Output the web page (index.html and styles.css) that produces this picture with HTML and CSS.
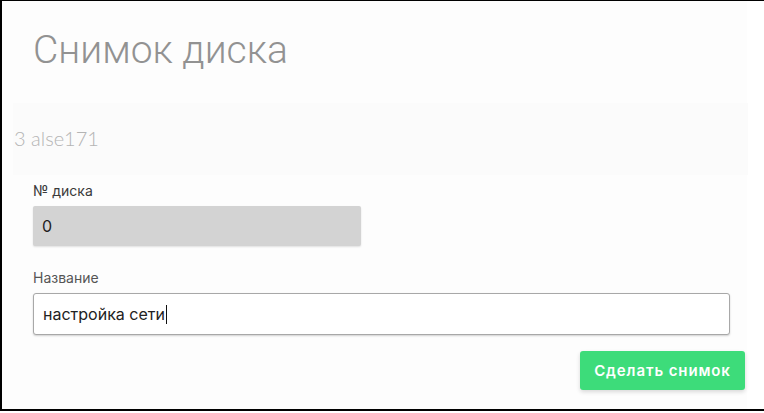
FILE: index.html
```html
<!DOCTYPE html>
<html lang="ru">
<head>
<meta charset="utf-8">
<link rel="stylesheet" href="styles.css">
</head>
<body>
<div class="frame">
  <div class="sheet">
    <h1 class="title">Снимок диска</h1>
    <div class="vm-panel">
      <div class="vm-name">3 alse171</div>
    </div>
    <form class="form">
      <label class="field-label">№ диска</label>
      <div class="input input-disabled">0</div>
      <label class="field-label label-name">Название</label>
      <div class="input input-text">настройка сети<span class="caret"></span></div>
      <div class="actions">
        <button type="button" class="btn-primary">Сделать снимок</button>
      </div>
    </form>
  </div>
</div>
</body>
</html>
```

FILE: styles.css
```css
html, body {
  margin: 0;
  padding: 0;
  background: #ffffff;
}
.frame {
  width: 762px;
  height: 408px;
  border-top: 1px solid #000;
  border-left: 2px solid #000;
  border-bottom: 2px solid #000;
  background: #ffffff;
}
.sheet {
  width: 745px;
  height: 408px;
  background: #fdfdfd;
  display: flex;
  flex-direction: column;
}
.title {
  margin: 0;
  padding: 25px 0 0 31px;
  height: 77px;
  font-family: Roboto, "Noto Sans", sans-serif;
  font-weight: 300;
  font-size: 39px;
  line-height: 48px;
  color: #929292;
  box-sizing: content-box;
}
.vm-panel {
  margin-left: 11px;
  width: 735px;
  height: 72px;
  background: #fbfbfb;
}
.vm-name {
  padding: 23px 0 0 1px;
  font-family: Lato, "Open Sans", sans-serif;
  font-weight: 300;
  font-size: 20px;
  line-height: 25px;
  color: #b4b4b4;
}
.form {
  padding: 0 2px 0 31px;
  display: flex;
  flex-direction: column;
}
.field-label {
  font-family: Inter, Roboto, sans-serif;
  font-size: 14px;
  line-height: 18px;
  color: #3a3a3a;
  margin-top: 7px;
  height: 24px;
}
.label-name {
  margin-top: 23px;
  height: 24px;
  color: #555;
}
.input {
  box-sizing: border-box;
  font-family: Inter, Roboto, sans-serif;
  font-size: 16px;
  color: #222;
  display: flex;
  align-items: center;
  padding-left: 9px;
  border-radius: 2px;
}
.input-disabled {
  width: 328px;
  height: 40px;
  background: #d3d3d3;
  box-shadow: 0 1px 2px rgba(0,0,0,0.12);
}
.input-text {
  width: 697px;
  height: 42px;
  background: #fff;
  border: 1px solid #a8a8a8;
  border-radius: 3px;
  box-shadow: 0 1px 2px rgba(0,0,0,0.18);
}
.caret {
  display: inline-block;
  width: 1px;
  height: 19px;
  background: #111;
  margin-left: 1px;
}
.actions {
  display: flex;
  justify-content: flex-end;
  margin-top: 16px;
}
.btn-primary {
  width: 165px;
  height: 39px;
  border: 0;
  border-radius: 3px;
  background: #3ddc7a;
  color: #fff;
  font-family: Inter, Roboto, sans-serif;
  font-weight: 600;
  font-size: 15px;
  letter-spacing: 0.9px;
  box-shadow: 0 2px 4px rgba(0,0,0,0.15);
  cursor: pointer;
  padding: 0;
}
```
